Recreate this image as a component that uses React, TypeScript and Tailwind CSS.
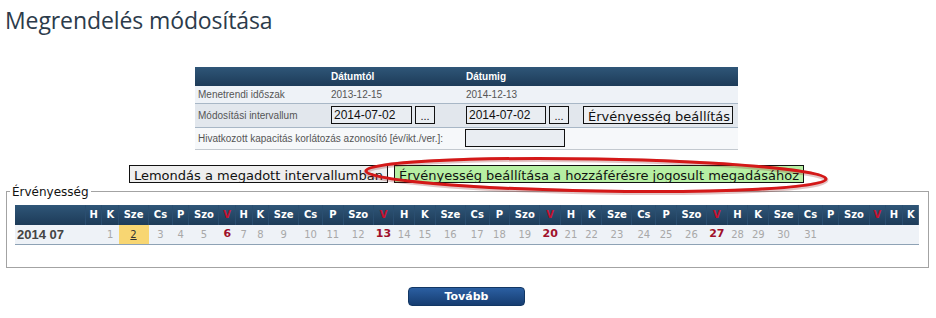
import React from 'react';

const weekdays = ['H', 'K', 'Sze', 'Cs', 'P', 'Szo', 'V'];
const baseWidth: Record<string, number> = { H: 16, K: 16, Sze: 29, Cs: 23, P: 16, Szo: 29, V: 16 };

const calendarCols = Array.from({ length: 37 }, (_, i) => {
  const label = weekdays[i % 7];
  const day = i >= 1 && i <= 31 ? i : null;
  let width = baseWidth[label];
  if (day !== null && day >= 10 && width < 20) width = 20;
  return { label, day, width, sunday: i % 7 === 6 };
});

function FakeInput({ value, className }: { value?: string; className: string }) {
  return (
    <div
      className={`h-[18px] border border-[#111] bg-[#e9edf2] pl-[2px] text-[12px] leading-[16px] text-[#111] font-['Liberation_Sans',sans-serif] ${className}`}
    >
      {value}
    </div>
  );
}

function DotsButton() {
  return (
    <div className="h-[18px] w-[20px] border border-[#111] bg-[#eaeef2] text-center text-[11px] leading-[18px] text-[#111] font-['Liberation_Sans',sans-serif]">
      ...
    </div>
  );
}

function LinkButton({ children, className }: { children: React.ReactNode; className: string }) {
  return (
    <div
      className={`h-[18px] overflow-hidden border border-[#111] px-[4px] text-[13px] leading-[19px] text-[#111] whitespace-nowrap font-['DejaVu_Sans',Verdana,sans-serif] ${className}`}
    >
      {children}
    </div>
  );
}

export default function App() {
  return (
    <div className="relative w-[936px] h-[318px] bg-white overflow-hidden font-['Liberation_Sans',Arial,sans-serif]">
      <h1 className="pl-[5px] pt-[6px] text-[23px] leading-[28px] text-[#2c3b4b] font-['Open_Sans',sans-serif] tracking-[-0.1px]">
        Megrendelés módosítása
      </h1>

      <div className="w-[933px]">
        {/* időszak táblázat */}
        <table className="mx-auto mt-[33px] w-[543px] border-collapse text-[10px] text-[#555]">
          <colgroup>
            <col className="w-[134px]" />
            <col className="w-[135px]" />
            <col className="w-[117px]" />
            <col className="w-[157px]" />
          </colgroup>
          <thead>
            <tr className="h-[19px] bg-gradient-to-b from-[#2f5678] to-[#1d3b58] text-left text-white">
              <th />
              <th className="pl-[2px] font-bold">Dátumtól</th>
              <th className="pl-[2px] font-bold">Dátumig</th>
              <th />
            </tr>
          </thead>
          <tbody>
            <tr className="h-[17px] bg-[#eef2f7] border-b border-[#a8b7c6]">
              <td className="pl-[3px]">Menetrendi időszak</td>
              <td className="pl-[2px]">2013-12-15</td>
              <td className="pl-[2px]">2014-12-13</td>
              <td />
            </tr>
            <tr className="h-[24px] bg-[#e2e7ed] border-b border-[#a8b7c6]">
              <td className="pl-[3px]">Módosítási intervallum</td>
              <td className="pl-[2px]">
                <div className="flex gap-[3px]">
                  <FakeInput value="2014-07-02" className="w-[81px]" />
                  <DotsButton />
                </div>
              </td>
              <td className="pl-[2px]">
                <div className="flex gap-[3px]">
                  <FakeInput value="2014-07-02" className="w-[80px]" />
                  <DotsButton />
                </div>
              </td>
              <td className="pl-[2px]">
                <LinkButton className="w-[150px] bg-[#eceff3] px-[3px]">Érvényesség beállítás</LinkButton>
              </td>
            </tr>
            <tr className="h-[22px] bg-[#f6f8fa] border-b border-[#c3c9cf]">
              <td colSpan={2} className="pl-[3px]">Hivatkozott kapacitás korlátozás azonosító [év/ikt./ver.]:</td>
              <td colSpan={2} className="pl-[1px]">
                <FakeInput className="h-[16px] w-[100px] bg-[#e6eaf0]" />
              </td>
            </tr>
          </tbody>
        </table>

        {/* gombok */}
        <div className="mt-[15px] flex justify-center gap-[6px]">
          <LinkButton className="bg-[#eeeeee]">Lemondás a megadott intervallumban</LinkButton>
          <LinkButton className="bg-[#b6efa3]">Érvényesség beállítása a hozzáférésre jogosult megadásához</LinkButton>
        </div>

        {/* érvényesség naptár */}
        <fieldset className="ml-[6px] mt-[1px] w-[923px] border border-[#a3a3a3] px-[8px] pb-[22px]">
          <legend className="-ml-[5px] px-[2px] text-[12px] leading-[16px] text-[#111] font-['DejaVu_Sans',Verdana,sans-serif]">
            Érvényesség
          </legend>
          <table className="mt-[5px] w-[904px] border-collapse font-['DejaVu_Sans',Verdana,sans-serif]">
            <thead>
              <tr className="h-[20px] bg-gradient-to-b from-[#2f5678] to-[#1d3b58] text-[10px] font-bold">
                <th className="w-[68px]" />
                {calendarCols.map((c, i) => (
                  <th
                    key={i}
                    style={{ width: c.width }}
                    className={`border-l border-[#2a4e70] text-center ${c.sunday ? 'text-[#c8102e]' : 'text-white'}`}
                  >
                    {c.label}
                  </th>
                ))}
              </tr>
            </thead>
            <tbody>
              <tr className="h-[17px] bg-[#eef2f7] border-b border-[#8ea2b5]">
                <td className="pl-[2px] text-[13px] font-bold text-[#444] font-['Liberation_Sans',Arial,sans-serif]">2014 07</td>
                {calendarCols.map((c, i) => (
                  <td
                    key={i}
                    className={`text-center text-[10px] ${
                      c.day === 2
                        ? 'bg-[#f8d672] text-[#333] underline'
                        : c.sunday
                          ? 'font-bold text-[11px] text-[#a0102a]'
                          : 'text-[#a8a8a8]'
                    }`}
                  >
                    {c.day ?? ''}
                  </td>
                ))}
              </tr>
            </tbody>
          </table>
        </fieldset>

        <div className="mt-[19px] flex justify-center">
          <div className="h-[19px] w-[117px] rounded-[4px] border border-[#123764] bg-gradient-to-b from-[#2b5fa2] to-[#163d71] text-center text-[11px] font-bold leading-[17px] text-white font-['DejaVu_Sans',Verdana,sans-serif]">
            Tovább
          </div>
        </div>
      </div>

      {/* piros kiemelés */}
      <svg className="absolute left-[355px] top-[151px] pointer-events-none" width="480" height="46" viewBox="0 0 480 46">
        <ellipse cx="241" cy="25" rx="230" ry="16" transform="rotate(1 241 25)" fill="none" stroke="#8a1a1a" strokeOpacity="0.25" strokeWidth="5" />
        <ellipse cx="241" cy="24" rx="230" ry="16" transform="rotate(1 241 24)" fill="none" stroke="#d41818" strokeWidth="3" />
      </svg>
    </div>
  );
}
